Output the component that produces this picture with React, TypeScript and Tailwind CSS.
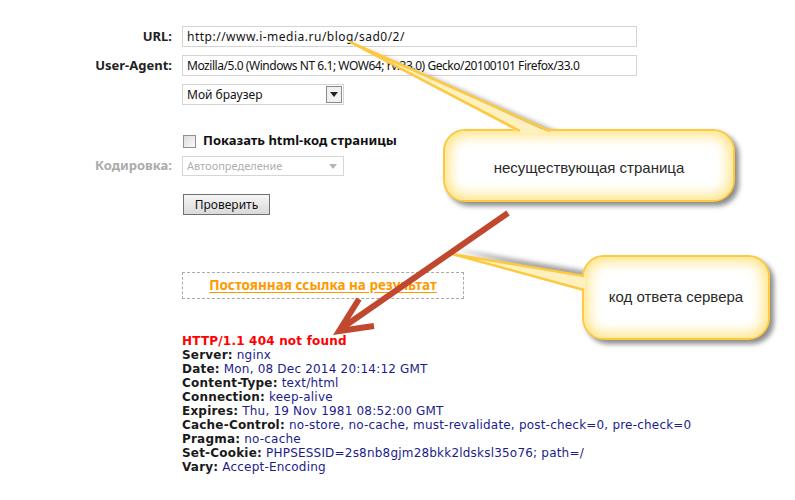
import React from 'react'

const headers: [string, string][] = [
  ['Server:', 'nginx'],
  ['Date:', 'Mon, 08 Dec 2014 20:14:12 GMT'],
  ['Content-Type:', 'text/html'],
  ['Connection:', 'keep-alive'],
  ['Expires:', 'Thu, 19 Nov 1981 08:52:00 GMT'],
  ['Cache-Control:', 'no-store, no-cache, must-revalidate, post-check=0, pre-check=0'],
  ['Pragma:', 'no-cache'],
  ['Set-Cookie:', 'PHPSESSID=2s8nb8gjm28bkk2ldsksl35o76; path=/'],
  ['Vary:', 'Accept-Encoding'],
]

function Callout({ className, text }: { className: string; text: string }) {
  return (
    <div
      className={`absolute flex items-center justify-center rounded-[22px] border-2 border-[#fcc940] bg-white shadow-[inset_0_0_14px_4px_#ffe27a,4px_4px_5px_rgba(0,0,0,0.45)] font-['Liberation_Sans',Arial,sans-serif] text-[15px] text-[#2a2a2a] ${className}`}
    >
      {text}
    </div>
  )
}

function DropArrow({ disabled }: { disabled?: boolean }) {
  return (
    <svg width="8" height="5" viewBox="0 0 8 5">
      <path d="M0 0h8L4 5z" fill={disabled ? '#b5b5b5' : '#222'} />
    </svg>
  )
}

export default function App() {
  return (
    <div className="relative h-[500px] w-[795px] overflow-hidden bg-white font-['Noto_Sans','Open_Sans',sans-serif] text-[12px] text-black">
      <div className="pt-[26px]">
        {/* form */}
        <div className="grid grid-cols-[172px_auto] gap-x-[10px] gap-y-[8px] items-center">
          <label className="text-right text-[13px] font-bold text-[#222]">URL:</label>
          <div className="flex h-[21px] w-[455px] items-center overflow-hidden whitespace-nowrap border border-[#d4d4d4] px-[4px] tracking-[0.5px] text-[#111]">
            http://www.i-media.ru/blog/sad0/2/
          </div>
          <label className="text-right text-[13px] font-bold text-[#222]">User-Agent:</label>
          <div className="flex h-[21px] w-[455px] items-center overflow-hidden whitespace-nowrap border border-[#d4d4d4] px-[4px] tracking-[-0.45px] text-[#111]">
            Mozilla/5.0 (Windows NT 6.1; WOW64; rv:33.0) Gecko/20100101 Firefox/33.0
          </div>
          <div />
          <div className="flex h-[21px] w-[162px] items-center justify-between border border-[#d4d4d4] pl-[4px] pr-[1px] text-[#111]">
            Мой браузер
            <span className="flex h-[17px] w-[16px] items-center justify-center border border-[#8a8a8a] bg-[#f0f0f0]">
              <DropArrow />
            </span>
          </div>
        </div>

        <div className="mt-[28px] grid grid-cols-[172px_auto] gap-x-[10px] gap-y-[7px] items-center">
          <div />
          <div className="flex items-center gap-[7px] h-[16px]">
            <span className="ml-[1px] h-[13px] w-[13px] border border-[#8f8f8f] bg-gradient-to-br from-[#dcdcdc] to-[#fafafa]" />
            <span className="text-[13px] font-bold text-[#111]">Показать html-код страницы</span>
          </div>
          <label className="text-right text-[13px] font-bold text-[#ababab]">Кодировка:</label>
          <div className="flex h-[20px] w-[162px] items-center justify-between border border-[#d6d6d6] pl-[4px] pr-[6px] text-[11px] text-[#b0b0b0]">
            Автоопределение
            <DropArrow disabled />
          </div>
          <div />
          <div className="mt-[11px]">
            <button className="ml-[1px] h-[21px] w-[87px] border border-[#707070] bg-gradient-to-b from-[#f6f6f6] to-[#dadada] text-[12px] text-[#111]">
              Проверить
            </button>
          </div>
        </div>

        <div className="ml-[182px] mt-[57px] flex h-[27px] w-[282px] items-center justify-center border border-dashed border-[#aaaaaa]">
          <a className="text-[13.5px] font-bold text-[#ff9900] underline underline-offset-2">
            Постоянная ссылка на результат
          </a>
        </div>

        {/* response headers */}
        <div className="ml-[182px] mt-[35px] font-['DejaVu_Sans',Verdana,sans-serif] text-[12px] leading-[14px] tracking-[0.2px]">
          <div className="font-bold text-[#ff0000]">HTTP/1.1 404 not found</div>
          {headers.map(([k, v]) => (
            <div key={k} className="whitespace-nowrap">
              <span className="font-bold text-[#1a1a1a]">{k}</span>{' '}
              <span className="text-[#1c1c8c]">{v}</span>
            </div>
          ))}
        </div>
      </div>

      {/* annotations */}
      <svg className="pointer-events-none absolute left-0 top-0" width="795" height="500">
        <defs>
          <filter id="blur" x="-20%" y="-20%" width="140%" height="140%">
            <feGaussianBlur stdDeviation="2.5" />
          </filter>
        </defs>
        <polygon points="356,44 528,131 556,131" fill="#777" opacity="0.7" filter="url(#blur)" transform="translate(6,3)" />
        <polygon points="452,254 584,276 584,290" fill="#777" opacity="0.7" filter="url(#blur)" transform="translate(2,-5)" />
      </svg>

      <Callout className="left-[443px] top-[129px] h-[73px] w-[292px] pt-[5px]" text="несуществующая страница" />
      <Callout className="left-[582px] top-[255px] h-[85px] w-[188px]" text="код ответа сервера" />

      <svg className="pointer-events-none absolute left-0 top-0" width="795" height="500">
        <polygon points="350,42 520,133 550,133" fill="#fff1bd" />
        <polyline points="520,131 350,42 550,131" fill="none" stroke="#fcc940" strokeWidth="2.5" strokeLinejoin="round" />
        <polygon points="452,254 585,276 585,290" fill="#fff1bd" />
        <polyline points="584,276 452,254 584,290" fill="none" stroke="#fcc940" strokeWidth="2.5" strokeLinejoin="round" />
        <g stroke="#c0482f" strokeWidth="6" strokeLinecap="butt" fill="none">
          <line x1="508" y1="213" x2="342" y2="328" />
          <polyline points="359,299 339,331 374,326" strokeLinejoin="miter" />
        </g>
      </svg>
    </div>
  )
}
